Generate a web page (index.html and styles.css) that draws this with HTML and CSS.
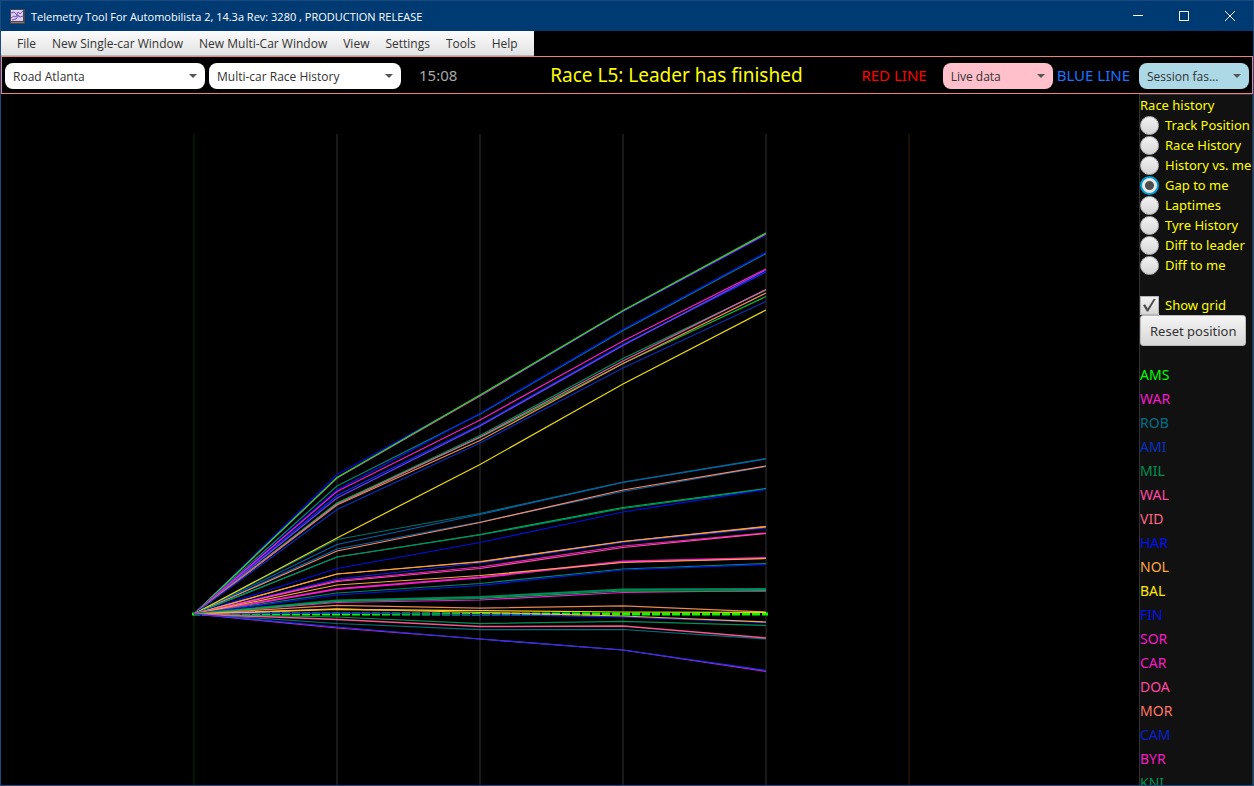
FILE: index.html
```html
<!DOCTYPE html>
<html lang="en">
<head>
<meta charset="utf-8">
<title>Telemetry Tool For Automobilista 2</title>
<link rel="stylesheet" href="styles.css">
</head>
<body>
<div class="window">
  <header class="titlebar">
    <svg class="app-icon" width="15" height="15" viewBox="0 0 15 15" aria-hidden="true">
      <rect width="15" height="15" fill="#4a4650"/>
      <rect x="1" y="1" width="12" height="11" fill="#d9d0f2"/>
      <path d="M1 9L4 7 6 8 8 3 10 5 13 2M1 4L4 3 7 6 10 8 13 7M2 11L6 10 9 6" fill="none" stroke="#7a4fc0"/>
      <path d="M1 13.500h13" stroke="#8b7a72"/>
    </svg>
    <h1 class="title">Telemetry Tool For Automobilista 2, 14.3a Rev: 3280 , PRODUCTION RELEASE</h1>
    <div class="caption-buttons">
      <button type="button" aria-label="Minimize"><svg width="10" height="10"><path d="M0 4.500h10"/></svg></button>
      <button type="button" aria-label="Maximize"><svg width="10" height="10"><path d="M.5.5h9v9h-9z"/></svg></button>
      <button type="button" aria-label="Close"><svg width="10" height="10"><path d="M0 0l10 10M10 0L0 10"/></svg></button>
    </div>
  </header>

  <nav class="menubar">
    <button type="button">File</button>
    <button type="button">New Single-car Window</button>
    <button type="button">New Multi-Car Window</button>
    <button type="button">View</button>
    <button type="button">Settings</button>
    <button type="button">Tools</button>
    <button type="button">Help</button>
  </nav>

  <div class="toolbar">
    <span class="combo combo-track"><select aria-label="Track"><option>Road Atlanta</option></select></span>
    <span class="combo combo-view"><select aria-label="View"><option>Multi-car Race History</option></select></span>
    <span class="clock">15:08</span>
    <span class="status">Race L5: Leader has finished</span>
    <label class="line-label red" for="red-line">RED LINE</label>
    <span class="combo combo-red"><select id="red-line"><option>Live data</option></select></span>
    <label class="line-label blue" for="blue-line">BLUE LINE</label>
    <span class="combo combo-blue"><select id="blue-line"><option>Session fas...</option></select></span>
  </div>

  <main class="content">
    <svg class="chart" role="img" aria-label="Gap to me per lap">
      <g transform="translate(-1 -94)">
        <g class="grid">
          <path class="start" d="M194 134V800"/>
          <path d="M337 134V800M480 134V800M623 134V800M766 134V800"/>
          <path class="end" d="M909 134V800"/>
        </g>
        <g class="traces">
          <path class="me" d="M192 614H768"/>
          <polyline stroke="#0000e8" points="194,614 337,474.500 480,396 623,311.500 766,235"/>
          <polyline stroke="#d050a0" points="194,614 337,478 480,396 623,311 766,234"/>
          <polyline stroke="#20d820" points="194,614 337,477.500 480,395 623,310.500 766,233"/>
          <polyline stroke="#008878" points="194,614 337,486 480,414 623,330.500 766,253.500"/>
          <polyline stroke="#0018f0" points="194,614 337,490 480,413.500 623,329.500 766,252.500"/>
          <polyline stroke="#0030ff" points="194,614 337,495.500 480,425 623,344.500 766,272"/>
          <polyline stroke="#7040f0" points="194,614 337,498 480,426 623,345.500 766,270"/>
          <polyline stroke="#f020c8" points="194,614 337,491.500 480,420 623,341 766,269"/>
          <polyline stroke="#009060" points="194,614 337,503.500 480,435.500 623,358.500 766,290"/>
          <polyline stroke="#10b030" points="194,614 337,503 480,437.500 623,363.500 766,296.500"/>
          <polyline stroke="#e88850" points="194,614 337,505 480,440.500 623,363.500 766,293"/>
          <polyline stroke="#e060a0" points="194,614 337,504.500 480,437 623,361 766,289.500"/>
          <polyline stroke="#0830b8" points="194,614 337,509.500 480,443 623,368 766,301.500"/>
          <polyline stroke="#007070" points="194,614 337,539.500 480,513.500 623,482 766,458.500"/>
          <polyline stroke="#0860b0" points="194,614 337,544.500 480,514.500 623,482.500 766,459"/>
          <polyline stroke="#0068a8" points="194,614 337,549 480,522 623,491.500 766,466.500"/>
          <polyline stroke="#ff8868" points="194,614 337,551 480,522.500 623,490 766,466"/>
          <polyline stroke="#e8d810" points="194,614 337,538 480,464.500 623,384 766,310"/>
          <polyline stroke="#00b838" points="194,614 337,557 480,534.500 623,507.500 766,488.500"/>
          <polyline stroke="#008878" points="194,614 337,557 480,535 623,508.500 766,489"/>
          <polyline stroke="#0010e0" points="194,614 337,568.500 480,542.500 623,512 766,489.500"/>
          <polyline stroke="#1020e8" points="194,614 337,579 480,563 623,542.500 766,528"/>
          <polyline stroke="#ff8858" points="194,614 337,574 480,561.500 623,541.500 766,527"/>
          <polyline stroke="#f8a830" points="194,614 337,574 480,562 623,541.500 766,526.500"/>
          <polyline stroke="#f020c8" points="194,614 337,580.500 480,567 623,546 766,533"/>
          <polyline stroke="#ff50a8" points="194,614 337,581.500 480,568.500 623,547.500 766,533.500"/>
          <polyline stroke="#f020c8" stroke-width="2" points="194,614 337,589 480,577.500 623,561.500 766,558"/>
          <polyline stroke="#f8a840" points="194,614 337,585 480,575.500 623,562.500 766,558.500"/>
          <polyline stroke="#008868" points="194,614 337,593 480,583.500 623,569 766,563.500"/>
          <polyline stroke="#0018e8" points="194,614 337,595 480,585.500 623,570 766,564.500"/>
          <polyline stroke="#f020d8" points="194,614 337,602.500 480,600 623,592.500 766,590.500"/>
          <polyline stroke="#008860" stroke-width="2" points="194,614 337,600.500 480,597 623,589.500 766,589"/>
          <polyline stroke="#10a848" points="194,614 337,601.500 480,598.500 623,591 766,591"/>
          <polyline stroke="#e88850" points="194,614 337,605.500 480,608 623,606 766,612"/>
          <polyline stroke="#f8d010" points="194,614 337,609.500 480,610.500 623,612 766,612.500"/>
          <polyline stroke="#1028ff" points="194,614 337,613 480,614.500 623,617 766,622.500"/>
          <polyline stroke="#f8b040" points="194,614 337,609 480,612.500 623,616 766,622"/>
          <polyline stroke="#009058" points="194,614 337,617 480,623.500 623,621.500 766,625.500"/>
          <polyline stroke="#007080" points="194,614 337,623.500 480,629.500 623,629.500 766,639"/>
          <polyline stroke="#f85890" stroke-width="1.500" points="194,614 337,619.500 480,626.500 623,626 766,638"/>
          <polyline stroke="#d020d0" points="194,614 337,628 480,639 623,650 766,671.500"/>
          <polyline stroke="#1838f0" points="194,614 337,627 480,639 623,650 766,670.500"/>
        </g>
      </g>
    </svg>

    <aside class="sidebar">
      <fieldset class="modes">
        <legend>Race history</legend>
        <label><input type="radio" name="mode">Track Position</label>
        <label><input type="radio" name="mode">Race History</label>
        <label><input type="radio" name="mode">History vs. me</label>
        <label><input type="radio" name="mode" checked>Gap to me</label>
        <label><input type="radio" name="mode">Laptimes</label>
        <label><input type="radio" name="mode">Tyre History</label>
        <label><input type="radio" name="mode">Diff to leader</label>
        <label><input type="radio" name="mode">Diff to me</label>
      </fieldset>
      <label class="show-grid"><input type="checkbox" checked>Show grid</label>
      <button type="button" class="reset">Reset position</button>
      <ul class="drivers">
        <li class="c-lime">AMS</li>
        <li class="c-magenta">WAR</li>
        <li class="c-teal">ROB</li>
        <li class="c-royal">AMI</li>
        <li class="c-green">MIL</li>
        <li class="c-pink">WAL</li>
        <li class="c-rose">VID</li>
        <li class="c-blue">HAR</li>
        <li class="c-orange">NOL</li>
        <li class="c-yellow">BAL</li>
        <li class="c-blue">FIN</li>
        <li class="c-magenta">SOR</li>
        <li class="c-magenta">CAR</li>
        <li class="c-pink">DOA</li>
        <li class="c-salmon">MOR</li>
        <li class="c-navy">CAM</li>
        <li class="c-magenta">BYR</li>
        <li class="c-green">KNI</li>
      </ul>
    </aside>
  </main>
</div>
</body>
</html>
```
FILE: styles.css
```css
* { box-sizing: border-box; }

body {
  margin: 0;
  background: #000;
  font-family: "Segoe UI", "Noto Sans", "Open Sans", sans-serif;
  font-size: 14px;
}

button, select { font: inherit; }

.window {
  display: flex;
  flex-direction: column;
  height: 100vh;
  border: 1px solid #1b4a80;
  overflow: hidden;
}

.titlebar {
  display: flex;
  align-items: center;
  flex: none;
  height: 30px;
  padding-left: 9px;
  background: #003a73;
  color: #fff;
}

.title {
  margin: 0 0 0 6px;
  font-family: "Segoe UI", "Open Sans", sans-serif;
  font-size: 11px;
  font-weight: 400;
  white-space: nowrap;
}

.caption-buttons {
  display: flex;
  margin-left: auto;
}

.caption-buttons button {
  display: grid;
  place-items: center;
  width: 46px;
  height: 30px;
  padding: 0;
  border: 0;
  background: none;
}

.caption-buttons path {
  fill: none;
  stroke: #fff;
}

.menubar {
  display: flex;
  flex: none;
  align-self: flex-start;
  height: 25px;
  padding: 0 8px;
  background: linear-gradient(#fcfcfc, #e2e2e2);
  border-bottom: 1px solid #b8b8b8;
}

.menubar button {
  padding: 0 8px;
  border: 0;
  background: none;
  color: #333;
  font-family: "Segoe UI", "Open Sans", sans-serif;
  font-size: 12px;
  white-space: nowrap;
}

.toolbar {
  display: flex;
  align-items: center;
  flex: none;
  height: 38px;
  padding: 0 3px;
  border: 1px solid #f08080;
}

.combo {
  position: relative;
  flex: none;
  height: 26px;
  margin-top: 2px;
  border-radius: 8px;
  background: #fff;
}

.combo::after {
  content: "";
  position: absolute;
  top: 11px;
  right: 8px;
  border: 4px solid transparent;
  border-top-color: #555;
  border-bottom: 0;
  pointer-events: none;
}

.combo select {
  display: block;
  width: 100%;
  height: 100%;
  padding: 0 24px 0 8px;
  border: 0;
  background: none;
  color: #333;
  font-family: "Segoe UI", "Open Sans", sans-serif;
  font-size: 12px;
  appearance: none;
}

.combo-track { width: 200px; }
.combo-view { width: 192px; margin-left: 4px; }
.combo-red { width: 110px; margin-right: 4px; margin-left: 16px; background: #ffc0cb; }
.combo-blue { width: 110px; margin-left: 9px; background: #add8e6; }

.clock {
  margin-left: 18px;
  color: #a9a9a9;
  font-size: 15px;
}

.status {
  flex: 1;
  padding-left: 34px;
  color: #ff0;
  font-size: 19px;
  text-align: center;
  white-space: nowrap;
}

.line-label {
  font-size: 15px;
  white-space: nowrap;
}

.red { color: #f00; }
.blue { color: #1e70ff; }

.content {
  display: flex;
  flex: 1;
  min-height: 0;
}

.chart {
  flex: 1;
  min-width: 0;
  height: 100%;
}

.grid path {
  stroke: #191919;
  stroke-width: 2;
}

.grid .start { stroke: #001800; }
.grid .end { stroke: #1c0d06; }

.traces {
  fill: none;
  stroke-width: 1.25;
}

.traces .me {
  stroke: #0f0;
  stroke-width: 3;
  stroke-dasharray: 8 2;
}

.sidebar {
  flex: none;
  width: 114px;
  border: 1px solid #333;
  border-width: 1px 1px 0;
  background: #111;
  color: #ff0;
  font-size: 13px;
  line-height: 20px;
  white-space: nowrap;
  overflow: hidden;
}

.modes {
  min-width: 0;
  margin: 0;
  padding: 0;
  border: 0;
}

.modes legend { padding: 0; }

.sidebar label {
  display: flex;
  align-items: center;
  gap: 6px;
  height: 20px;
}

.sidebar input {
  position: relative;
  flex: none;
  width: 19px;
  height: 19px;
  margin: 0;
  border: 1px solid #b5b5b5;
  background: linear-gradient(#f2f2f2, #d6d6d6);
  appearance: none;
}

.sidebar input[type="radio"] { border-radius: 50%; }

.sidebar input[type="radio"]:checked {
  border: 2px solid #039ed3;
  background: radial-gradient(circle, #4d4d4d 4px, #e8e8e8 5px);
}

.sidebar input[type="checkbox"]:checked::after {
  content: "";
  position: absolute;
  inset: 2px;
  background: #4d4d4d;
  clip-path: polygon(0 52%, 16% 44%, 36% 76%, 84% 0, 100% 0, 40% 100%, 30% 100%);
}

.show-grid { margin-top: 20px; }

.reset {
  display: block;
  height: 31px;
  padding: 0 9px;
  border: 1px solid #bbb;
  border-radius: 3px;
  background: linear-gradient(#f4f4f4, #d8d8d8);
  color: #333;
}

.drivers {
  margin: 17px 0 0;
  padding: 0;
  font-size: 14px;
  line-height: 24px;
  list-style: none;
}

.c-lime { color: #0f0; }
.c-magenta { color: #f41cc8; }
.c-teal { color: #007088; }
.c-royal { color: #0830c0; }
.c-green { color: #009050; }
.c-pink { color: #ff48a0; }
.c-rose { color: #ff6880; }
.c-blue { color: #0010f0; }
.c-orange { color: #ffa840; }
.c-yellow { color: #ffe800; }
.c-salmon { color: #ff7868; }
.c-navy { color: #0820d0; }
```
